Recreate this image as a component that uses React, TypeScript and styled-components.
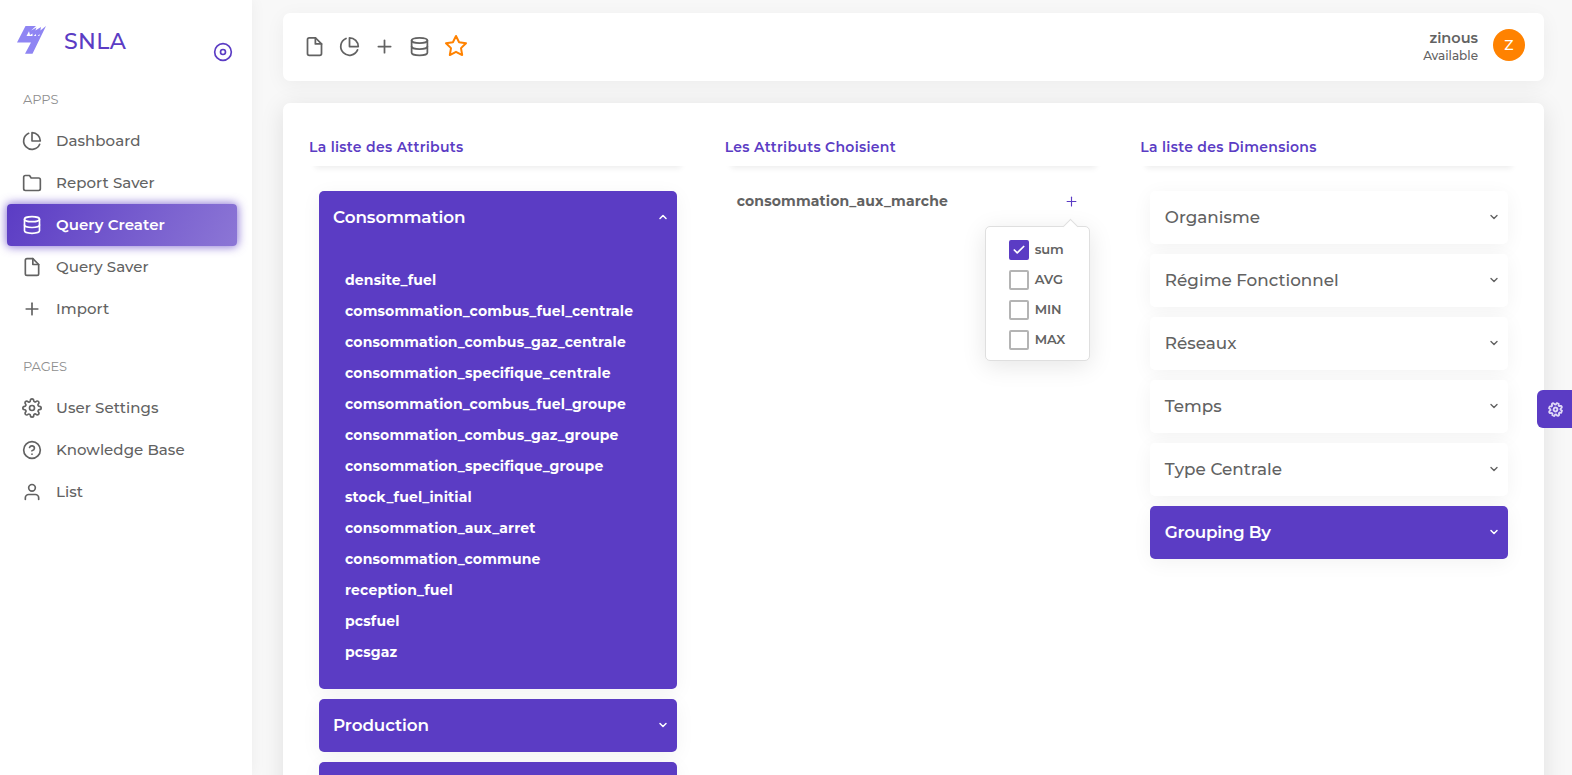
import React from "react";
import styled, { createGlobalStyle, css } from "styled-components";
import {
  FiPieChart, FiFolder, FiDatabase, FiFile, FiPlus, FiSettings, FiHelpCircle,
  FiUser, FiDisc, FiStar, FiChevronDown, FiChevronUp, FiCheck,
} from "react-icons/fi";

const purple = "#5b3cc4";

const Global = createGlobalStyle`
  * { box-sizing: border-box; }
  body {
    margin: 0;
    background: #f8f8f8;
    color: #626262;
    font: 500 14px/21px Montserrat, Inter, "Liberation Sans", sans-serif;
    letter-spacing: 0.16px;
  }
`;

const Page = styled.div`
  display: flex;
  height: 775px;
  overflow: hidden;
  position: relative;
`;

const Sidebar = styled.aside`
  width: 252px;
  flex: none;
  background: #fff;
  box-shadow: 0 0 15px rgba(0, 0, 0, 0.05);
`;

const Brand = styled.div`
  display: flex;
  height: 84px;
  padding: 24px 19px 0 16px;
  color: ${purple};
`;

const BrandName = styled.span`
  margin-left: 18px;
  flex: 1;
  font-size: 22px;
  line-height: 35px;
  letter-spacing: 0.35px;
`;

const Collapse = styled.span`
  display: flex;
  padding-top: 18px;
`;

const SectionLabel = styled.div<{ $first?: boolean }>`
  height: 36px;
  padding: 5px 0 0 23px;
  margin-top: ${(p) => (p.$first ? 0 : 21)}px;
  font-size: 13px;
  font-weight: 400;
  color: #8f8f8f;
  letter-spacing: -0.15px;
`;

const NavItem = styled.div<{ $active?: boolean }>`
  display: flex;
  align-items: center;
  gap: 14px;
  height: 42px;
  width: 230px;
  margin-left: 7px;
  padding-left: 15px;
  font-size: 15px;
  white-space: nowrap;
  letter-spacing: 0.06px;
  svg { flex: none; }
  span { padding-bottom: 2px; }
  ${(p) => p.$active && css`
    color: #fff;
    font-weight: 600;
    border-radius: 4px;
    background: linear-gradient(118deg, ${purple}, rgba(91, 60, 196, 0.7));
    box-shadow: 0 0 10px 1px rgba(91, 60, 196, 0.7);
  `}
`;

const Main = styled.main`
  flex: 1;
  min-width: 0;
  padding: 13px 28px 0 31px;
  display: flex;
  flex-direction: column;
  gap: 22px;
`;

const Topbar = styled.header`
  height: 68px;
  flex: none;
  display: flex;
  align-items: center;
  justify-content: space-between;
  padding: 0 19px 0 21px;
  background: #fff;
  border-radius: 7px;
  box-shadow: 0 4px 20px rgba(0, 0, 0, 0.05);
`;

const Shortcuts = styled.div`
  display: flex;
  align-items: center;
  gap: 14px;
  padding-bottom: 2px;
`;

const User = styled.div`
  display: flex;
  align-items: center;
  gap: 15px;
  padding-bottom: 4px;
`;

const UserText = styled.div`
  padding-top: 4px;
  text-align: right;
  line-height: 18px;
`;

const UserName = styled.div`
  font-size: 14.5px;
  font-weight: 600;
  letter-spacing: 0;
`;

const UserState = styled.div`
  font-size: 12px;
  letter-spacing: 0;
`;

const Avatar = styled.div`
  width: 32px;
  height: 32px;
  border-radius: 50%;
  background: #ff8200;
  color: #fff;
  display: grid;
  place-items: center;
  font-size: 14px;
`;

const Card = styled.section`
  flex: none;
  height: 760px;
  display: grid;
  grid-template-columns: repeat(3, minmax(0, 1fr));
  column-gap: 38px;
  padding: 27px 26px;
  background: #fff;
  border-radius: 7px;
  box-shadow: 0 4px 25px rgba(0, 0, 0, 0.1);
`;

const Heading = styled.div`
  height: 36px;
  padding-top: 7px;
  color: ${purple};
  font-size: 14px;
  font-weight: 600;
  letter-spacing: 0.3px;
  box-shadow: 0 8px 6px -6px rgba(0, 0, 0, 0.08);
`;

const Stack = styled.div`
  display: flex;
  flex-direction: column;
  gap: 10px;
  width: 358px;
  margin: 25px 0 0 10px;
`;

const Panel = styled.div<{ $filled?: boolean; $open?: boolean }>`
  height: ${(p) => (p.$open ? 498 : 53)}px;
  border-radius: 5px;
  background: ${(p) => (p.$filled ? purple : "#fff")};
  color: ${(p) => (p.$filled ? "#fff" : "#626262")};
  box-shadow: 0 4px 20px rgba(0, 0, 0, 0.05);
`;

const PanelHead = styled.div<{ $spacing?: number; $pad: number; $bold?: boolean }>`
  display: flex;
  align-items: center;
  justify-content: space-between;
  height: 52px;
  padding: 0 8px 0 ${(p) => p.$pad}px;
  font-size: 16.8px;
  font-weight: ${(p) => (p.$bold ? 600 : 500)};
  letter-spacing: ${(p) => p.$spacing ?? 0.02}px;
`;

const AttributeList = styled.div`
  padding-top: 22px;
`;

const Attribute = styled.div`
  height: 31px;
  padding-left: 26px;
  line-height: 31px;
  font-weight: 700;
`;

const Chosen = styled.div`
  position: relative;
  display: flex;
  align-items: center;
  justify-content: space-between;
  margin-top: 25px;
  height: 20px;
  padding: 0 23px 0 12px;
  font-weight: 700;
`;

const AddIcon = styled(FiPlus)`
  color: ${purple};
  margin-top: 1px;
`;

const Popover = styled.div`
  position: absolute;
  top: 35px;
  left: 260px;
  width: 105px;
  height: 135px;
  padding: 8px 0 0 23px;
  background: #fff;
  border: 1px solid #dfdfdf;
  border-radius: 5px;
  box-shadow: 0 5px 25px rgba(0, 0, 0, 0.1);
  &::before {
    content: "";
    position: absolute;
    top: -6px;
    left: 79px;
    width: 10px;
    height: 10px;
    background: #fff;
    border: solid #dfdfdf;
    border-width: 1px 0 0 1px;
    transform: rotate(45deg);
  }
`;

const Option = styled.label`
  display: flex;
  align-items: center;
  gap: 6px;
  height: 30px;
  font-size: 13px;
  font-weight: 600;
  letter-spacing: -0.05px;
`;

const OptionName = styled.span`
  padding-bottom: 2px;
`;

const Box = styled.span<{ $on?: boolean }>`
  width: 20px;
  height: 20px;
  display: grid;
  place-items: center;
  border-radius: 2px;
  border: 2px solid ${(p) => (p.$on ? purple : "#b4b4b4")};
  background: ${(p) => (p.$on ? purple : "#fff")};
  svg { color: #fff; }
`;

const Customizer = styled.div`
  position: absolute;
  right: 0;
  top: 390px;
  width: 35px;
  height: 38px;
  padding-left: 11px;
  display: flex;
  align-items: center;
  border-radius: 6px 0 0 6px;
  background: ${purple};
  color: #e0d9f6;
  svg { transform: rotate(20deg); }
`;

const Logo = () => (
  <svg width="30" height="30" viewBox="0 0 30 30" fill="#8f85f3" fillRule="evenodd">
    <path d="M9.5 2H20L15.2 6.5L20.5 3.5L19.4 6.5L25 3L24.4 6.5L30 2L16.5 29.7H9L15 18.5H1Z M10.5 12L13 7.3L14 11L16.5 9.5V12Z M17.8 12L19.7 10L20.2 12Z M21.8 12L23.6 10L23.4 12Z" />
  </svg>
);

const apps = [
  { icon: FiPieChart, label: "Dashboard" },
  { icon: FiFolder, label: "Report Saver" },
  { icon: FiDatabase, label: "Query Creater", active: true },
  { icon: FiFile, label: "Query Saver" },
  { icon: FiPlus, label: "Import" },
];

const pages = [
  { icon: FiSettings, label: "User Settings" },
  { icon: FiHelpCircle, label: "Knowledge Base" },
  { icon: FiUser, label: "List" },
];

const attributes = [
  "densite_fuel",
  "comsommation_combus_fuel_centrale",
  "consommation_combus_gaz_centrale",
  "consommation_specifique_centrale",
  "comsommation_combus_fuel_groupe",
  "consommation_combus_gaz_groupe",
  "consommation_specifique_groupe",
  "stock_fuel_initial",
  "consommation_aux_arret",
  "consommation_commune",
  "reception_fuel",
  "pcsfuel",
  "pcsgaz",
];

const dimensions = ["Organisme", "Régime Fonctionnel", "Réseaux", "Temps", "Type Centrale"];

const options = ["sum", "AVG", "MIN", "MAX"];

export default function App() {
  return (
    <Page>
      <Global />
      <Sidebar>
        <Brand>
          <Logo />
          <BrandName>SNLA</BrandName>
          <Collapse><FiDisc size={20} /></Collapse>
        </Brand>
        <SectionLabel $first>APPS</SectionLabel>
        {apps.map(({ icon: Icon, label, active }) => (
          <NavItem key={label} $active={active}><Icon size={20} /><span>{label}</span></NavItem>
        ))}
        <SectionLabel>PAGES</SectionLabel>
        {pages.map(({ icon: Icon, label }) => (
          <NavItem key={label}><Icon size={20} /><span>{label}</span></NavItem>
        ))}
      </Sidebar>
      <Main>
        <Topbar>
          <Shortcuts>
            <FiFile size={21} /><FiPieChart size={21} /><FiPlus size={21} />
            <FiDatabase size={21} /><FiStar size={24} color="#ff8200" />
          </Shortcuts>
          <User>
            <UserText>
              <UserName>zinous</UserName>
              <UserState>Available</UserState>
            </UserText>
            <Avatar>Z</Avatar>
          </User>
        </Topbar>
        <Card>
          <div>
            <Heading>La liste des Attributs</Heading>
            <Stack>
              <Panel $filled $open>
                <PanelHead $spacing={-0.07} $pad={14} $bold>
                  <span>Consommation</span><FiChevronUp size={12} strokeWidth={3} />
                </PanelHead>
                <AttributeList>
                  {attributes.map((name) => <Attribute key={name}>{name}</Attribute>)}
                </AttributeList>
              </Panel>
              <Panel $filled>
                <PanelHead $spacing={-0.08} $pad={14} $bold>
                  <span>Production</span><FiChevronDown size={12} strokeWidth={3} />
                </PanelHead>
              </Panel>
              <Panel $filled />
            </Stack>
          </div>
          <div>
            <Heading>Les Attributs Choisient</Heading>
            <Chosen>
              <span>consommation_aux_marche</span>
              <AddIcon size={15} strokeWidth={1.8} />
              <Popover>
                {options.map((name, i) => (
                  <Option key={name}>
                    <Box $on={i === 0}>{i === 0 && <FiCheck size={14} strokeWidth={3} />}</Box>
                    <OptionName>{name}</OptionName>
                  </Option>
                ))}
              </Popover>
            </Chosen>
          </div>
          <div>
            <Heading>La liste des Dimensions</Heading>
            <Stack>
              {dimensions.map((name) => (
                <Panel key={name}>
                  <PanelHead $pad={14.5}><span>{name}</span><FiChevronDown size={12} strokeWidth={2.8} /></PanelHead>
                </Panel>
              ))}
              <Panel $filled>
                <PanelHead $spacing={-0.25} $pad={14.5} $bold>
                  <span>Grouping By</span><FiChevronDown size={12} strokeWidth={3} />
                </PanelHead>
              </Panel>
            </Stack>
          </div>
        </Card>
      </Main>
      <Customizer><FiSettings size={15} strokeWidth={3} /></Customizer>
    </Page>
  );
}
